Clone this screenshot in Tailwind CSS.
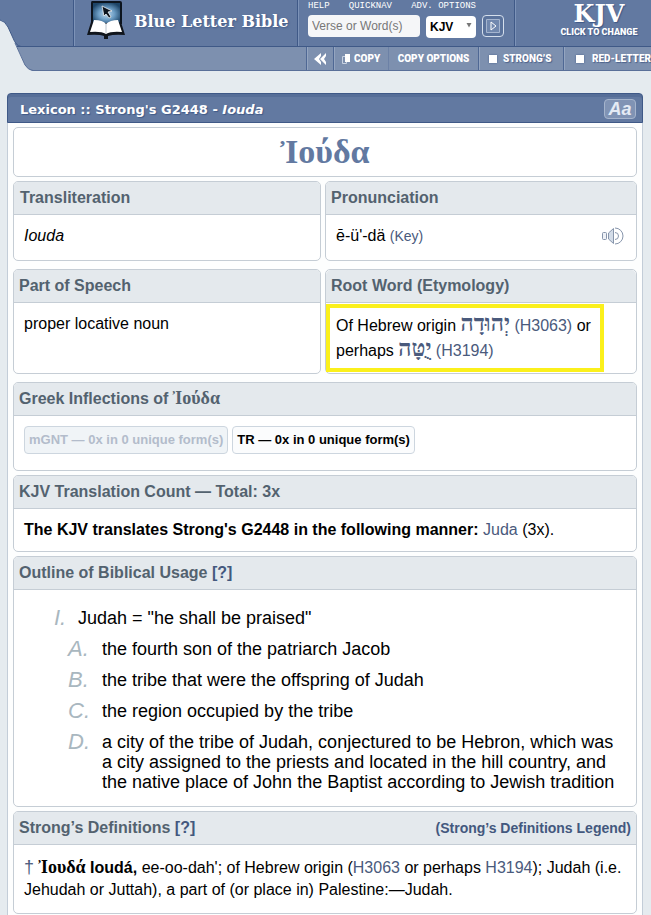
<!DOCTYPE html>
<html lang="en">
<head>
  <meta charset="UTF-8">
  <meta name="viewport" content="width=device-width, initial-scale=1.0">
  <title>G2448 - Iouda - Strong's Greek Lexicon</title>
  <script src="https://cdn.jsdelivr.net/npm/@tailwindcss/browser@4"></script>
</head>
<body class="bg-[#e5ebef] font-['Liberation_Sans',Arial,sans-serif] text-black">
  <!-- Header -->
  <header class="relative text-white">
    <div class="flex h-[47px] bg-[#6279a1] border-b border-[#3f5987]">
      <div class="w-[74px] shrink-0 border-r border-[#3f5987]"></div>
      <a href="#" class="w-56 shrink-0 flex items-start gap-2 pl-3 border-r border-[#3f5987] shadow-[inset_1px_0_0_#7d93b8]">
        <svg class="w-10 h-10 shrink-0" viewBox="0 0 40 40">
          <defs>
            <radialGradient id="screen" cx=".5" cy=".55" r=".6">
              <stop offset="0" stop-color="#c3dcef"/>
              <stop offset=".5" stop-color="#6b9cc4"/>
              <stop offset="1" stop-color="#1d4467"/>
            </radialGradient>
          </defs>
          <path d="M6 1h28q2 0 2 2v21H5V3q0-2 1-2z" fill="#0c141e"/>
          <path d="M7 3h27v20H7z" fill="url(#screen)"/>
          <path d="M5 22L1 35q12-1 17 1v3h4v-3q6-2 17-1l-4-13-15 3z" fill="#10151c"/>
          <path d="M8 20q9 0 12 4 4-4 12-4l4 12q-11-1-16 2-5-3-16-2z" fill="#fff"/>
          <path d="M20 24v9" stroke="#b8c2cc" fill="none"/>
          <path d="M16 6l2 10 2-2 3 4 2-1-3-5 4-1z" fill="#0c141e" stroke="#fff" stroke-width=".7"/>
        </svg>
        <span class="pt-2.5 font-['DejaVu_Serif',serif] font-bold text-base/6 whitespace-nowrap [text-shadow:1px_1px_2px_#3f5987]">Blue Letter Bible</span>
      </a>
      <form class="w-[217px] shrink-0 px-2.5 border-r border-[#3f5987] shadow-[inset_1px_0_0_#7d93b8]">
        <nav class="flex h-3.5 justify-between pr-7 font-['Liberation_Mono',monospace] text-[9px]/3">
          <a href="#">HELP</a>
          <a href="#">QUICKNAV</a>
          <a href="#">ADV. OPTIONS</a>
        </nav>
        <div class="flex items-center gap-1.5">
          <input type="text" aria-label="Verse or Word(s)" placeholder="Verse or Word(s)" class="w-28 h-[22px] px-1 rounded-sm bg-[#f5f6f8] text-xs text-black placeholder:text-[#777]">
          <div class="relative">
            <select aria-label="Bible version" class="appearance-none w-[50px] h-[22px] pl-1 rounded-sm bg-white text-xs font-bold text-black">
              <option>KJV</option>
            </select>
            <svg class="absolute right-1 top-2 w-1.5 h-1.5 pointer-events-none" viewBox="0 0 6 6"><path d="M.5 1h5L3 5.500z" fill="#777"/></svg>
          </div>
          <button type="submit" aria-label="Search" class="flex items-center justify-center w-[22px] h-[22px] rounded-sm border border-[#d5dfec] bg-[#5b739c]">
            <svg class="w-3.5 h-3.5" viewBox="0 0 14 14"><path d="M.5.5h13v13H.5z" fill="#7188ae" stroke="#a5b5cf"/><path d="M5 3l5 4-5 4z" fill="#7188ae" stroke="#fff"/></svg>
          </button>
        </div>
      </form>
      <button class="flex-1 flex flex-col items-center pl-8 shadow-[inset_1px_0_0_#7d93b8] whitespace-nowrap">
        <span class="pt-0.5 font-['DejaVu_Serif',serif] font-bold text-2xl/6 [text-shadow:1px_1px_1px_#3f5987]">KJV</span>
        <span class="font-['Roboto',sans-serif] font-black text-[9px]/3 [text-shadow:1px_1px_1px_#3f5987]">CLICK TO CHANGE</span>
      </button>
    </div>
    <!-- Toolbar -->
    <div class="flex h-6 overflow-hidden bg-[#7d90af] border-b border-[#5a7099] font-['Roboto',sans-serif] font-black text-[10px] whitespace-nowrap [text-shadow:1px_1px_1px_#4c628b]">
      <div class="w-[307px] shrink-0 border-r border-[#4f6894]"></div>
      <button aria-label="Collapse" class="flex items-center justify-center w-[27px] shrink-0 border-r border-[#4f6894] shadow-[inset_1px_0_0_#94a5c0]">
        <svg class="w-3 h-3" viewBox="0 0 12 12"><path d="M7 0v3L5 6l2 3v3L0 6zM12 0v3l-2 3 2 3v3L6 6z" fill="#fff"/></svg>
      </button>
      <button class="flex items-center gap-1 w-[55px] shrink-0 pl-2 border-r border-[#6c81a6] shadow-[inset_1px_0_0_#94a5c0]">
        <svg class="w-2 h-2.5" viewBox="0 0 8 10"><path d="M.5 2.500h4v7h-4z" fill="none" stroke="#c9d3e2"/><path d="M3 0h5v8H3z" fill="#fff"/></svg>
        COPY
      </button>
      <button class="w-[90px] shrink-0 border-r border-[#4f6894] text-center">COPY OPTIONS</button>
      <label class="flex items-center gap-1.5 w-[85px] shrink-0 pl-2.5 border-r border-[#4f6894] shadow-[inset_1px_0_0_#94a5c0]">
        <input type="checkbox" class="appearance-none w-2 h-2 bg-white shadow-[0_0_2px_#3f5987]">STRONG’S
      </label>
      <label class="flex items-center gap-2 shrink-0 pl-3 shadow-[inset_1px_0_0_#94a5c0]">
        <input type="checkbox" class="appearance-none w-2 h-2 bg-white shadow-[0_0_2px_#3f5987]">RED-LETTER
      </label>
    </div>
    <!-- Curved left edge of the header -->
    <svg class="absolute left-0 top-0 w-9 h-[71px]" viewBox="0 0 36 71">
      <path d="M0 20q5 1 8 7l6 13 11 25q3 5 8 6H0z" fill="#e5ebef"/>
      <path d="M0 20q5 1 8 7l5 11q3 8 8 8.500h15" fill="none" stroke="#3f5987"/>
      <path d="M15 43l10 22q3 5 8 5.500h3" fill="none" stroke="#5a7099"/>
    </svg>
  </header>

  <!-- Lexicon panel -->
  <main class="mt-[22px] ml-[7px] mr-2 rounded-t-sm border-x border-[#c3cdd8] bg-[#fdfefe]">
    <div class="-mx-px flex items-center justify-between h-[30px] pl-3 pr-1.5 rounded-t-sm border border-[#3f5987] bg-[#6279a1] text-white shadow-[inset_0_3px_0_#566e98]">
      <h1 class="pt-1 font-['DejaVu_Sans',Verdana,sans-serif] font-bold text-[13px] [text-shadow:1px_1px_1px_#3f5987]">Lexicon :: Strong's G2448 - <i>Iouda</i></h1>
      <button aria-label="Text size" class="mt-0.5 w-8 h-5 rounded-sm border border-[#a5b4cc] bg-[#8093b4] font-bold italic text-lg/4 text-[#e5ebf4]">Aa</button>
    </div>

    <div class="flex flex-col gap-1 p-[5px] pt-1 text-base">
      <div class="h-[50px] rounded-[5px] border border-[#c5cdd5] bg-white text-center font-['Liberation_Serif',serif] font-bold text-[34px]/12 text-[#6279a1]">Ἰούδα</div>

      <div class="grid grid-cols-[309fr_313fr] gap-x-1 gap-y-2 mb-1">
        <section class="h-20 rounded-[5px] border border-[#c5cdd5] bg-white overflow-hidden">
          <h2 class="h-[33px] px-1.5 border-b border-[#c5cdd5] bg-[#e4e9ed] font-bold text-[#53626f] leading-8">Transliteration</h2>
          <p class="px-2.5 py-[11px] leading-5 italic">Iouda</p>
        </section>
        <section class="h-20 rounded-[5px] border border-[#c5cdd5] bg-white overflow-hidden">
          <h2 class="h-[33px] px-[5px] border-b border-[#c5cdd5] bg-[#e4e9ed] font-bold text-[#53626f] leading-8">Pronunciation</h2>
          <div class="flex items-center justify-between pl-2.5 pr-3 py-[11px] leading-5">
            <p>ē-ü'-dä <a href="#" class="text-sm text-[#4a5a7c]">(Key)</a></p>
            <button aria-label="Listen">
              <svg class="w-[22px] h-[18px]" viewBox="0 0 22 18" fill="none" stroke="#8795ab">
                <path d="M1.500 5.500h2q1 0 1 1v5q0 1-1 1h-2q-1 0-1-1v-5q0-1 1-1z" fill="#eef1f6"/>
                <path d="M6.500 6v6l5 4.500v-15z" fill="#d3dce8"/>
                <path d="M13 5.500a3.500 3.500 0 0 1 0 7"/>
                <path d="M13 1a8 8 0 0 1 0 16"/>
              </svg>
            </button>
          </div>
        </section>
        <section class="h-[105px] rounded-[5px] border border-[#c5cdd5] bg-white overflow-hidden">
          <h2 class="h-[33px] px-[5px] border-b border-[#c5cdd5] bg-[#e4e9ed] font-bold text-[#53626f] leading-8">Part of Speech</h2>
          <p class="px-2.5 py-[11px] leading-5">proper locative noun</p>
        </section>
        <section class="relative h-[105px] rounded-[5px] border border-[#c5cdd5] bg-white">
          <h2 class="h-[33px] px-[5px] rounded-t-[5px] border-b border-[#c5cdd5] bg-[#e4e9ed] font-bold text-[#53626f] leading-8">Root Word (Etymology)</h2>
          <p class="px-2.5 py-2.5 leading-[25px]">Of Hebrew origin <a href="#" class="text-[#4a5a7c]"><bdi lang="he" class="font-['Liberation_Serif',serif] font-bold text-[23px]/5">יְהוּדָה</bdi> (H3063)</a> or<br>perhaps <a href="#" class="text-[#4a5a7c]"><bdi lang="he" class="font-['Liberation_Serif',serif] font-bold text-[23px]/5">יֻטָּה</bdi> (H3194)</a></p>
          <!-- Highlight box -->
          <div class="absolute left-0 top-[34px] w-[278px] h-[68px] border-4 border-[#fbf01c]"></div>
        </section>
      </div>

      <section class="h-[89px] rounded-[5px] border border-[#c5cdd5] bg-white overflow-hidden">
        <h2 class="h-[33px] px-[5px] border-b border-[#c5cdd5] bg-[#e4e9ed] font-bold text-[#53626f] leading-8">Greek Inflections of <span class="font-['Liberation_Serif',serif] text-lg/5">Ἰούδα</span></h2>
        <div class="flex gap-1 px-2.5 py-2.5 text-[13px] font-bold">
          <button disabled class="h-7 px-1 rounded-sm border border-[#cdd6df] bg-[#f0f4f7] text-[#b3bccb]">mGNT — 0x in 0 unique form(s)</button>
          <button class="h-7 px-1 rounded-sm border border-[#cdd6df] bg-[#fbfcfd]">TR — 0x in 0 unique form(s)</button>
        </div>
      </section>

      <section class="h-[77px] rounded-[5px] border border-[#c5cdd5] bg-white overflow-hidden">
        <h2 class="h-[33px] px-[5px] border-b border-[#c5cdd5] bg-[#e4e9ed] font-bold text-[#53626f] leading-8">KJV Translation Count — Total: 3x</h2>
        <p class="px-2.5 py-[11px] leading-5"><b>The KJV translates Strong's G2448 in the following manner:</b> <a href="#" class="text-[#4a5a7c]">Juda</a> (3x).</p>
      </section>

      <section class="rounded-[5px] border border-[#c5cdd5] bg-white overflow-hidden">
        <h2 class="h-[33px] px-[5px] border-b border-[#c5cdd5] bg-[#e4e9ed] font-bold text-[#53626f] leading-8">Outline of Biblical Usage <a href="#" class="text-[#43587e]">[?]</a></h2>
        <ol class="pl-10 pr-4 pt-[18px] pb-3.5 text-lg/5">
          <li>
            <div class="flex"><span class="w-6 text-[22px]/5 italic text-[#a9b7bf]">I.</span>Judah = "he shall be praised"</div>
            <ol class="flex flex-col gap-[11px] pl-3.5 pt-[11px]">
              <li class="flex"><span class="w-[34px] shrink-0 text-[22px]/5 italic text-[#a9b7bf]">A.</span>the fourth son of the patriarch Jacob</li>
              <li class="flex"><span class="w-[34px] shrink-0 text-[22px]/5 italic text-[#a9b7bf]">B.</span>the tribe that were the offspring of Judah</li>
              <li class="flex"><span class="w-[34px] shrink-0 text-[22px]/5 italic text-[#a9b7bf]">C.</span>the region occupied by the tribe</li>
              <li class="flex"><span class="w-[34px] shrink-0 text-[22px]/5 italic text-[#a9b7bf]">D.</span>a city of the tribe of Judah, conjectured to be Hebron, which was a city assigned to the priests and located in the hill country, and the native place of John the Baptist according to Jewish tradition</li>
            </ol>
          </li>
        </ol>
      </section>

      <section class="rounded-[5px] border border-[#c5cdd5] bg-white overflow-hidden">
        <div class="flex items-center justify-between h-[33px] px-[5px] border-b border-[#c5cdd5] bg-[#e4e9ed] font-bold text-[#53626f]">
          <h2>Strong’s Definitions <a href="#" class="text-[#43587e]">[?]</a></h2>
          <a href="#" class="text-sm text-[#43587e]">(Strong’s Definitions Legend)</a>
        </div>
        <p class="px-2.5 py-3 leading-[22px]"><a href="#" class="text-lg/5 text-[#4a5a7c]">†</a> <b class="font-['Liberation_Serif',serif] text-lg/5">Ἰουδά</b> <b>Ioudá,</b> ee-oo-dah'; of Hebrew origin (<a href="#" class="text-[#4a5a7c]">H3063</a> or perhaps <a href="#" class="text-[#4a5a7c]">H3194</a>); Judah (i.e. Jehudah or Juttah), a part of (or place in) Palestine:—Judah.</p>
      </section>
    </div>
  </main>
</body>
</html>
